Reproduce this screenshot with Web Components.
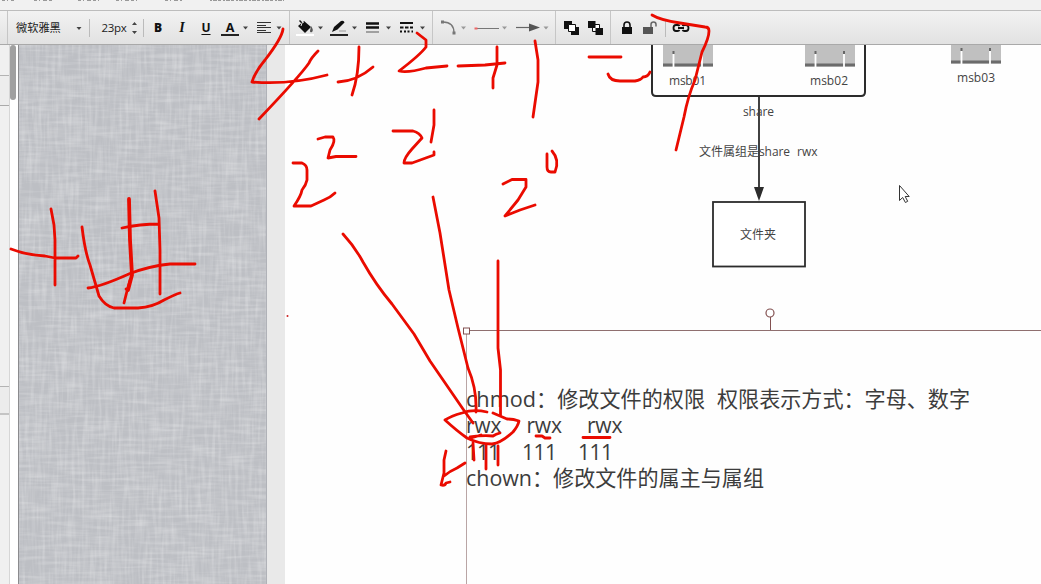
<!DOCTYPE html>
<html lang="zh">
<head>
<meta charset="utf-8">
<title>Diagram editor</title>
<style>
html,body{margin:0;width:1041px;height:584px;overflow:hidden}
body{font-family:"Open Sans","Noto Sans CJK SC",sans-serif;color:#333;background:#fff}
</style>
</head>
<body>
<diagram-editor></diagram-editor>
<script>
const define=(name,html)=>customElements.define(name,class extends HTMLElement{
  constructor(){super();this.attachShadow({mode:'open'}).innerHTML=html;}
});

define('menu-strip',`<style>:host{display:block;height:10px;background:#f1f1f1;border-bottom:1px solid #bdbdbd;box-sizing:content-box}svg{display:block}</style>
<svg width="1041" height="10"><path stroke="#999" stroke-dasharray="3 2 1 3 4 2" d="M2 .5H14M34 .5H54M78 .5H99M116 .5H140M165 .5H182"/><path stroke="#999" stroke-dasharray="2 1 4 1 3 2" d="M210 .5H284"/></svg>`);

define('tool-text',`<style>:host{display:flex;align-items:center;justify-content:center;height:33px;box-sizing:border-box;font-size:11.5px;line-height:33px;color:#222;white-space:nowrap}</style><slot></slot>`);

define('tool-sep',`<style>:host{display:block;width:1px;height:33px;background:#c6c6c6}:host([short]){height:18px;background:#bbb}</style>`);

define('tool-icons',`<style>:host{display:block;height:33px}</style><slot></slot>`);

define('tool-bar',`<style>
:host{display:flex;align-items:center;height:33px;border-bottom:1px solid #a9a9a9;background:linear-gradient(#f2f2f2,#e2e2e2);box-sizing:content-box}
svg{display:block}
.g{font:900 12px "Noto Sans",sans-serif;color:#111;line-height:33px;width:24px}
.i{font-style:italic;font-family:"Liberation Serif",serif;font-weight:bold;font-size:14px}
.font{width:63px;justify-content:flex-start;padding-left:8px;font-size:11.2px}
.size{width:36px;letter-spacing:-.35px}
.u{text-decoration:underline;text-underline-offset:2px}
</style>
<span style="width:7px"></span><tool-sep></tool-sep>
<tool-text class="font">微软雅黑</tool-text>
<svg width="18" height="33" viewBox="71 11 18 33"><path d="M76.500 27h5l-2.500 3z" fill="#444"/></svg>
<tool-sep short></tool-sep><span style="width:6px"></span>
<tool-text class="size">23px</tool-text><span style="width:1px"></span>
<svg width="10" height="33" viewBox="133 11 10 33" style="margin-left:-2px"><path d="M134 25l2.500-3 2.500 3zM134 31l2.500 3 2.500-3z" fill="#444"/></svg>
<tool-sep short style="margin-left:2px"></tool-sep>
<span style="width:2px"></span>
<tool-text class="g">B</tool-text><tool-text class="g i">I</tool-text><tool-text class="g u" style="font-size:12px;font-weight:700">U</tool-text><tool-text class="g" style="font-size:12.5px;font-weight:700;width:24px">A</tool-text>
<svg width="47" height="33" viewBox="242 11 47 33" style="overflow:visible"><path d="M221 34h18v2h-18z" fill="#222"/><path d="M243 26.500h5l-2.500 3zM276.500 26.500h5l-2.500 3z" fill="#444"/><path d="M257 22.500h14M257 25.500h9M257 27.500h14M257 30.500h9M257 32.500h14" stroke="#333" stroke-width="1.200"/></svg>
<tool-sep></tool-sep>
<tool-icons><svg width="142" height="33" viewBox="290 11 142 33">
<path d="M298 26l6-5 7 6-6 6z" fill="#111"/><path d="M299.500 20.500l6 6" stroke="#111" stroke-width="1.400"/><path d="M301 26q1-5 3-4" stroke="#eee" fill="none"/><path d="M311 26q3 4 1 6-2 1-2-1z" fill="#555"/><path d="M296 34h18v2h-18z" fill="#fff"/>
<path d="M332 32l2-5 7-6q3-1 3.500 1.500l-7 7z" fill="#111"/><path d="M339 31h7" stroke="#999"/><path d="M330 34h18v2h-18z" fill="#222"/>
<path d="M366 23.500h13M366 27.500h13" stroke="#111" stroke-width="2.500"/><path d="M366 32h13" stroke="#888" stroke-width="1.500"/>
<path d="M400 23h13" stroke="#111" stroke-width="2"/><path d="M400 27.500h3.500m1.500 0h3.500m1.500 0h3" stroke="#111" stroke-width="2"/><path d="M400 31.500h2m2 0h2m1.500 0h2m2 0h1.500" stroke="#111" stroke-width="2"/>
<path d="M318 26.500h5l-2.500 3zM352 26.500h5l-2.500 3zM386 26.500h5l-2.500 3zM420 26.500h5l-2.500 3z" fill="#444"/></svg></tool-icons>
<tool-sep></tool-sep>
<tool-icons><svg width="122" height="33" viewBox="433 11 122 33">
<path d="M443 22q11 0 11 11" fill="none" stroke="#777" stroke-width="1.300"/><path d="M441 20.500h3v3h-3zM452.500 31.500h3v3h-3z" fill="#777"/>
<path d="M475 28.500h24" stroke="#777"/><path d="M474.500 27.500h3v2h-3z" fill="#e66"/>
<path d="M516 27.500h14" stroke="#666" stroke-width="1.200"/><path d="M529 23.500l11 4-11 4z" fill="#555"/>
<path d="M461 26.500h5l-2.500 3zM502 26.500h5l-2.500 3zM543.500 26.500h5l-2.500 3z" fill="#999"/></svg></tool-icons>
<tool-sep></tool-sep>
<tool-icons><svg width="54" height="33" viewBox="556 11 54 33"><path d="M564 21h8v8h-8zM571 27h8v8h-8z" fill="#111"/><path d="M568.500 24.500h7v7h-7z" fill="#fff" stroke="#111"/>
<path d="M592.500 24.500h7v7h-7z" fill="#fff" stroke="#111"/><path d="M588 21h7.500v7h-7.500zM595.500 28h7.500v7h-7.500z" fill="#111"/></svg></tool-icons>
<tool-sep></tool-sep>
<tool-icons><svg width="54" height="33" viewBox="611 11 54 33"><path d="M622 27h10v7h-10z" fill="#111"/><path d="M624 27v-2q0-3 3-3t3 3v2" fill="none" stroke="#111" stroke-width="1.600"/><path d="M643 27h10v7h-10z" fill="#555"/><path d="M651 27v-2.500q0-2.500 2.500-2.500t2.500 2.500v2" fill="none" stroke="#666" stroke-width="1.500"/></svg></tool-icons>
<tool-sep short></tool-sep>
<tool-icons><svg width="30" height="33" viewBox="666 11 30 33"><path d="M679.500 26q-.5-1-2-1h-1.500q-2.500 0-2.500 3t2.500 3h1.500q1.500 0 2-1M682.500 26q.5-1 2-1h1.500q2.500 0 2.500 3t-2.500 3h-1.500q-1.500 0-2-1M678 28h6" fill="none" stroke="#111" stroke-width="1.800"/></svg></tool-icons>`);

define('side-panel',`<style>
:host{display:grid;grid-template-rows:30px 1px 30px 280px 1px 28px 1fr;width:9px;background:#f0f0f0;border-right:1px solid #d6d6d6}
i{background:#b3b3b3}b{background:#ededed;border-bottom:1px solid #aaa}u{border-bottom:2px solid #c4c4c4;background:#ececec}
</style><span></span><i></i><b></b><span></span><i></i><u></u><span></span>`);

define('scroll-track',`<style>:host{display:block;width:8px;background:#fff;border-right:1px solid #8b8b8e}b{display:block;width:6px;height:55px;margin:0;border-radius:3px;background:#a0a0a0}</style><b></b>`);

define('linen-desk',`<style>:host{display:block;width:248px;background:#bdbfc4;overflow:hidden}svg{display:block}</style>
<svg width="248" height="539">
<filter id="h" x="0" y="0" width="100%" height="100%" color-interpolation-filters="sRGB"><feTurbulence type="fractalNoise" baseFrequency=".03 .3" numOctaves="2" seed="4"/><feColorMatrix values="0 0 0 0 1  0 0 0 0 1  0 0 0 0 1  .5 0 0 0 -.2"/></filter>
<filter id="v" x="0" y="0" width="100%" height="100%" color-interpolation-filters="sRGB"><feTurbulence type="fractalNoise" baseFrequency=".3 .03" numOctaves="2" seed="9"/><feColorMatrix values="0 0 0 0 1  0 0 0 0 1  0 0 0 0 1  .5 0 0 0 -.2"/></filter>
<rect width="248" height="539" filter="url(#h)"/><rect width="248" height="539" filter="url(#v)"/>
<path d="M247.500 0v539" stroke="#b0b2b8"/></svg>`);

define('server-node',`<style>:host{position:absolute;display:block;width:50px}svg{display:block}</style>
<svg width="50" height="24"><path d="M0 0h50v21.500h-50z" fill="#c0c0c0"/><path d="M0 18.500h50v3h-50z" fill="#6b6b6b"/><path d="M10.500 9v13M39 9v13" stroke="#fff" stroke-width="1.800"/><path d="M9.500 6h2v3h-2zM38 6h2v3h-2z" fill="#666"/></svg>`);

define('flow-diagram',`<style>:host{position:absolute;inset:0;display:block;overflow:hidden}
.s{position:absolute;left:0;top:0}
text{white-space:pre;fill:#444;font-size:12px}.big text{font-size:21.1px;fill:#3c3c3c}
</style>
<server-node style="left:663px;top:45px"></server-node><server-node style="left:805px;top:45px"></server-node><server-node style="left:951px;top:42px"></server-node>
<svg class="s" width="1041" height="584">
<path d="M652 45V92q0 4 4 4H861q4 0 4-4V45" fill="none" stroke="#2c2c2c" stroke-width="2"/>
<path d="M759 96V190" stroke="#2c2c2c" stroke-width="1.800"/><path d="M754 187h10l-5 14z" fill="#2c2c2c"/>
<rect x="713" y="202" width="92" height="64.500" fill="#fff" stroke="#2c2c2c" stroke-width="1.800"/>
<text x="669" y="84.500" textLength="37">msb01</text><text x="810" y="84.500" textLength="38">msb02</text><text x="957" y="82" textLength="38">msb03</text>
<text x="743" y="116" textLength="31">share</text>
<text x="699" y="155.500" textLength="60">文件属组是</text><text x="759" y="155.500" textLength="31">share</text><text x="797" y="155.500" textLength="20.500">rwx</text>
<text x="740" y="239" textLength="36">文件夹</text>
<path d="M466.500 330.500H1041" stroke="#8f6f6f"/><path d="M466.500 331V584" stroke="#b9a5a5"/>
<path d="M770.500 317V330" stroke="#825050"/><circle cx="770" cy="313" r="4" fill="#fff" stroke="#825050" stroke-width="1.200"/><rect x="463.500" y="328" width="6" height="6" fill="#fff" stroke="#825050"/>
<g class="big">
<text x="466" y="406.500" textLength="70" lengthAdjust="spacingAndGlyphs">chmod</text><text x="536" y="406.500" textLength="169">：修改文件的权限</text><text x="717" y="406.500" textLength="253">权限表示方式：字母、数字</text>
<text x="466" y="433" textLength="35.500">rwx</text><text x="526.500" y="433" textLength="35.500">rwx</text><text x="587" y="433" textLength="35.500">rwx</text>
<text x="466" y="459.500" textLength="34">111</text><text x="522" y="459.500" textLength="35">111</text><text x="578" y="459.500" textLength="35">111</text>
<text x="466" y="486" textLength="66" lengthAdjust="spacingAndGlyphs">chown</text><text x="532" y="486" textLength="232">：修改文件的属主与属组</text>
</g>
</svg>`);

define('ink-layer',`<style>:host{position:absolute;inset:0;display:block}svg{display:block}</style>
<svg width="1041" height="584" fill="none" stroke="#ea0b00" stroke-width="2.800" stroke-linecap="round" stroke-linejoin="round">
<path d="M283 29Q282 38 265 60Q255 72 252 82Q290 85 327 75M318 51Q311 58 309 63Q300 76 259 119"/>
<path d="M359 47Q359 75 352 95M338 82Q357 81 373 67"/>
<path d="M417 33L426 40V47Q420 55 399 71Q408 73 426 68L447 66"/>
<path d="M458 66L485 65L505 63M497 47V65L493 78V88"/>
<path d="M535 41L538 60V82L533 117"/>
<path d="M318 139L325 137H333Q336 141 330 150L328 158L336 156.500H356"/>
<path d="M293 163H302Q307 165 307 170V180Q306 185 302 190Q301 196 294 206H311L324 200Q331 197 335 193"/>
<path d="M393 131H413Q420 133 422 138L412 149Q404 158 404 163H412L434 155V152M434 110V125L431 142"/>
<path d="M503 184L512 179.500H526V187L518 200L505 216L520 210L535 205"/>
<path d="M547 154V167Q547 172 551 172H555Q560 160 552 151"/>
<path d="M589 57H621M608 74Q610 81 620 81H635Q641 80 643 77Q648 77 650 72"/>
<path d="M652 15Q660 20 680 23L705 27Q709 27 709 31Q709 38 702 52L695 80Q688 96 684 117L676 150"/>
<path d="M51 209L54 225L55 240V285M11 249Q26 255 45 256L55 258H76L78 256"/>
<path d="M82 227Q85 252 90 265L99 296Q105 306 114 308H138Q153 307 164 300Q176 294 180 293"/>
<path d="M88 288Q100 287 130 273.500Q150 266 170 264H195"/>
<path d="M129 199L130 240L132 275L128 290" stroke-width="3.800"/><path d="M130 280L127 291L124 303M126 289L127 290"/>
<path d="M155 191L159 218L160 250V294M122 228Q140 224 159 224"/>
<path d="M343 234Q355 247 363 262Q376 285 392 304L414 334L430 361L463 409L473 423"/>
<path d="M433 197L440 233L449 290L458 328L468 368Q477 389 476 412"/>
<path d="M498 261V348L500.500 370V415"/>
<path d="M487 412Q473 409 462 413Q451 416 445 420Q457 431 467 438Q479 444 492 444Q501 443 513 432Q518 426 519 421Q513 419 507 419L493 413"/>
<path d="M470 437Q483 435 493 436Q496 434 500 433M471 438L481 435"/>
<path d="M473 443L474 460M486 445V469M498 446V465"/>
<path d="M446 451L444 460V473L441 485Q445 486 446 483L450 482M465 463L457 468Q450 471 444 476"/>
<path d="M536 436H542L545 438H550M583 437.500H610"/>
<circle cx="287.500" cy="316" r="1" fill="#c22" stroke="none"/>
</svg>`);

define('mouse-cursor',`<style>:host{position:absolute;left:898px;top:184px;display:block}svg{display:block}</style>
<svg width="13" height="20"><path d="M1.500 1.500v15l3.200-3 2.700 5 2.300-1.200-2.500-4.800h4z" fill="#fff" stroke="#333"/></svg>`);

define('diagram-editor',`<style>
:host{display:flex;flex-direction:column;position:relative;width:1041px;height:584px;overflow:hidden;background:#fefefe}
main{display:flex;flex:1;align-items:stretch}
.gutter{width:18px;background:#e9e9e9}
</style>
<menu-strip></menu-strip><tool-bar></tool-bar>
<main><side-panel></side-panel><scroll-track></scroll-track><linen-desk></linen-desk><div class="gutter"></div></main>
<flow-diagram style="clip-path:inset(45px 0 0 0)"></flow-diagram><ink-layer></ink-layer><mouse-cursor></mouse-cursor>`);
</script>
</body>
</html>
